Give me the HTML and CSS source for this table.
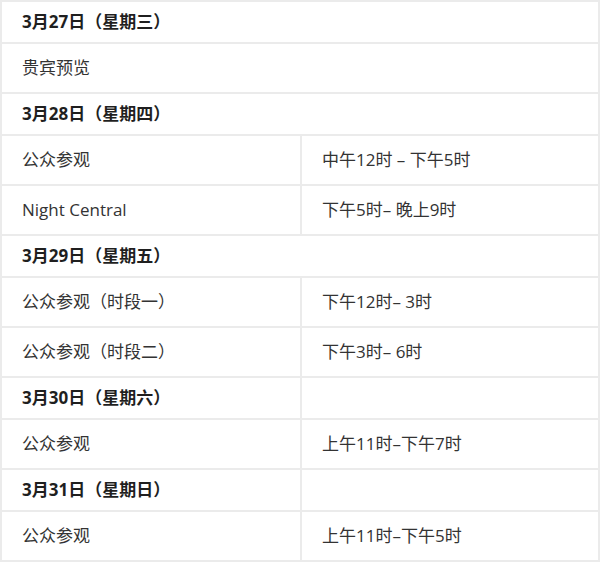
FILE: index.html
```html
<!DOCTYPE html>
<html lang="zh-CN">
<head>
<meta charset="utf-8">
<title>日程</title>
<link rel="stylesheet" href="styles.css">
</head>
<body>
<table class="schedule">
  <colgroup>
    <col class="col-event">
    <col class="col-time">
  </colgroup>
  <tbody>
    <tr class="day"><td colspan="2">3月27日（星期三）</td></tr>
    <tr class="item"><td colspan="2">贵宾预览</td></tr>
    <tr class="day"><td colspan="2">3月28日（星期四）</td></tr>
    <tr class="item"><td>公众参观</td><td>中午12时 – 下午5时</td></tr>
    <tr class="item"><td>Night Central</td><td>下午5时– 晚上9时</td></tr>
    <tr class="day"><td colspan="2">3月29日（星期五）</td></tr>
    <tr class="item"><td>公众参观（时段一）</td><td>下午12时– 3时</td></tr>
    <tr class="item"><td>公众参观（时段二）</td><td>下午3时– 6时</td></tr>
    <tr class="day"><td>3月30日（星期六）</td><td></td></tr>
    <tr class="item"><td>公众参观</td><td>上午11时–下午7时</td></tr>
    <tr class="day"><td>3月31日（星期日）</td><td></td></tr>
    <tr class="item"><td>公众参观</td><td>上午11时–下午5时</td></tr>
  </tbody>
</table>
</body>
</html>
```
FILE: styles.css
```css
html, body {
  margin: 0;
  padding: 0;
  background: #ffffff;
}

.schedule {
  width: 600px;
  table-layout: fixed;
  border-collapse: separate;
  border-spacing: 0;
  border-top: 2px solid #ebebeb;
  border-left: 2px solid #ebebeb;
  font-family: "Open Sans", "Noto Sans CJK SC", sans-serif;
  font-size: 17px;
  color: #333333;
}

.col-event {
  width: 300px;
}

.col-time {
  width: 298px;
}

.schedule td {
  padding: 0 20px;
  border-right: 2px solid #ebebeb;
  border-bottom: 2px solid #ebebeb;
  white-space: nowrap;
  vertical-align: middle;
}

.day td {
  line-height: 40px;
  font-weight: 700;
  color: #1f1f1f;
}

.item td {
  line-height: 48px;
}
```
